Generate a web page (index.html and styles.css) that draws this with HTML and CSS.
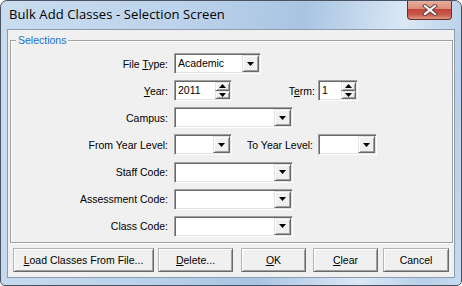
FILE: index.html
```html
<!DOCTYPE html>
<html lang="en">
<head>
  <meta charset="UTF-8">
  <title>Bulk Add Classes - Selection Screen</title>
  <link rel="stylesheet" href="styles.css">
</head>
<body>

  <!-- Dialog window -->
  <div class="window">
    <div class="titlebar">
      <span class="title">Bulk Add Classes - Selection Screen</span>
      <div class="close">
        <svg width="16" height="12" viewBox="0 0 16 12">
          <path d="M3 2 L13 10 M13 2 L3 10" stroke="#5a3b36" stroke-width="4" stroke-linecap="square"/>
          <path d="M3 2 L13 10 M13 2 L3 10" stroke="#fff" stroke-width="2.2" stroke-linecap="square"/>
        </svg>
      </div>
    </div>

    <div class="client">
      <!-- Selections group -->
      <div class="group">
        <span class="legend">Selections</span>
        <div class="rows">
          <div class="row">
            <label class="lbl">File <u>T</u>ype:</label>
            <div class="field w-type">
              <span class="val">Academic</span>
              <span class="drop"><svg width="7" height="4"><polygon points="0,0 7,0 3.5,4" fill="#000"/></svg></span>
            </div>
          </div>
          <div class="row">
            <label class="lbl"><u>Y</u>ear:</label>
            <div class="field w-year">
              <span class="val">2011</span>
              <span class="spin">
                <span class="arrow"><svg width="7" height="4"><polygon points="3.5,0 7,4 0,4" fill="#000"/></svg></span>
                <span class="arrow"><svg width="7" height="4"><polygon points="0,0 7,0 3.5,4" fill="#000"/></svg></span>
              </span>
            </div>
            <label class="lbl-term">T<u>e</u>rm:</label>
            <div class="field w-term">
              <span class="val">1</span>
              <span class="spin">
                <span class="arrow"><svg width="7" height="4"><polygon points="3.5,0 7,4 0,4" fill="#000"/></svg></span>
                <span class="arrow"><svg width="7" height="4"><polygon points="0,0 7,0 3.5,4" fill="#000"/></svg></span>
              </span>
            </div>
          </div>
          <div class="row">
            <label class="lbl">Campus:</label>
            <div class="field w-wide">
              <span class="val"></span>
              <span class="drop"><svg width="7" height="4"><polygon points="0,0 7,0 3.5,4" fill="#000"/></svg></span>
            </div>
          </div>
          <div class="row">
            <label class="lbl">From Year Level:</label>
            <div class="field w-level">
              <span class="val"></span>
              <span class="drop"><svg width="7" height="4"><polygon points="0,0 7,0 3.5,4" fill="#000"/></svg></span>
            </div>
            <label class="lbl-to">To Year Level:</label>
            <div class="field w-level2">
              <span class="val"></span>
              <span class="drop"><svg width="7" height="4"><polygon points="0,0 7,0 3.5,4" fill="#000"/></svg></span>
            </div>
          </div>
          <div class="row">
            <label class="lbl">Staff Code:</label>
            <div class="field w-wide">
              <span class="val"></span>
              <span class="drop"><svg width="7" height="4"><polygon points="0,0 7,0 3.5,4" fill="#000"/></svg></span>
            </div>
          </div>
          <div class="row">
            <label class="lbl">Assessment Code:</label>
            <div class="field w-wide">
              <span class="val"></span>
              <span class="drop"><svg width="7" height="4"><polygon points="0,0 7,0 3.5,4" fill="#000"/></svg></span>
            </div>
          </div>
          <div class="row">
            <label class="lbl">Class Code:</label>
            <div class="field w-wide">
              <span class="val"></span>
              <span class="drop"><svg width="7" height="4"><polygon points="0,0 7,0 3.5,4" fill="#000"/></svg></span>
            </div>
          </div>
        </div>
      </div>

      <!-- Dialog buttons -->
      <div class="buttons">
        <button class="btn b-load"><u>L</u>oad Classes From File...</button>
        <button class="btn b-delete"><u>D</u>elete...</button>
        <button class="btn b-ok"><u>O</u>K</button>
        <button class="btn b-clear"><u>C</u>lear</button>
        <button class="btn b-cancel">Cancel</button>
      </div>
    </div>
  </div>

</body>
</html>
```

FILE: styles.css
```css
/* Page */
body { margin: 0; background: #fff; }

/* Window frame */
.window {
  width: 462px;
  height: 286px;
  box-sizing: border-box;
  border: 1px solid #4a5361;
  border-radius: 7px 7px 5px 5px;
  background: linear-gradient(100deg, #c9dcf0 0%, #bdd3eb 35%, #a9c4e2 60%, #dbe8f5 80%, #b9d0ea 92%, #c6d9ee 100%);
  padding: 0 6px 7px;
  display: flex;
  flex-direction: column;
  overflow: hidden;
}

/* Title bar */
.titlebar {
  height: 28px;
  display: flex;
  align-items: flex-start;
}
.title {
  font-family: "Open Sans", sans-serif;
  font-size: 13px;
  letter-spacing: 0.1px;
  color: #000;
  margin: 4px 0 0 2px;
}
.close {
  margin: -1px 3px 0 auto;
  width: 45px;
  height: 20px;
  box-sizing: border-box;
  border: 1px solid #6a2f28;
  border-top: none;
  border-radius: 0 0 4px 4px;
  background: linear-gradient(#eab3a3 0%, #dc8e7a 45%, #c2473a 50%, #c75545 75%, #dd9880 100%);
  display: flex;
  align-items: center;
  justify-content: center;
}

/* Client area */
.client {
  flex: 1;
  background: #f0f0f0;
  border: 1px solid #8c9cb0;
  display: flex;
  flex-direction: column;
  font-family: "Liberation Sans", Arial, sans-serif;
  font-size: 10.5px;
  color: #000;
}

/* Group box */
.group {
  position: relative;
  margin: 10px 0 0 2px;
  width: 443px;
  height: 203px;
  box-sizing: border-box;
  border: 1px solid #a0a0a0;
  box-shadow: inset 1px 1px #fff, 1px 1px #fff;
}
.legend {
  position: absolute;
  top: -7px;
  left: 5px;
  padding: 0 2px;
  background: #f0f0f0;
  color: #1a6fd1;
  line-height: 12px;
}
.rows {
  display: flex;
  flex-direction: column;
  gap: 6.17px;
  padding-top: 12px;
}
.row {
  display: flex;
  align-items: center;
  height: 21px;
}
.lbl {
  width: 157px;
  margin-right: 6px;
  text-align: right;
}
.lbl-term { width: 83px; margin-right: 3px; text-align: right; }
.lbl-to { width: 81px; margin-right: 5px; text-align: right; }

/* Sunken fields */
.field {
  height: 21px;
  box-sizing: border-box;
  background: #fff;
  border: 1px solid;
  border-color: #a0a0a0 #fff #fff #a0a0a0;
  box-shadow: inset 1px 1px #696969, inset -1px -1px #e3e3e3;
  padding: 1px;
  display: flex;
}
.w-type { width: 87px; }
.w-year { width: 58px; }
.w-term { width: 40px; }
.w-wide { width: 119px; }
.w-level { width: 58px; }
.w-level2 { width: 59px; }
.val {
  flex: 1;
  padding-left: 2px;
  line-height: 17px;
}

/* Raised parts */
.drop, .arrow {
  box-sizing: border-box;
  background: #f0f0f0;
  border: 1px solid;
  border-color: #e3e3e3 #696969 #696969 #e3e3e3;
  box-shadow: inset 1px 1px #fff, inset -1px -1px #a0a0a0;
  display: flex;
  align-items: center;
  justify-content: center;
}
.drop { width: 17px; height: 17px; }
.drop svg, .arrow svg { display: block; }
.spin {
  width: 15px;
  display: flex;
  flex-direction: column;
}
.arrow { flex: 1; }

/* Buttons */
.buttons {
  display: flex;
  margin-top: 5px;
}
.btn {
  height: 24px;
  box-sizing: border-box;
  padding: 0;
  background: #f0f0f0;
  border: 1px solid;
  border-color: #b4b4b4 #696969 #696969 #b4b4b4;
  box-shadow: inset 1px 1px #fff, inset -1px -1px #a0a0a0;
  font-family: "Liberation Sans", Arial, sans-serif;
  font-size: 10.5px;
  color: #000;
}
.b-load { width: 141px; margin-left: 5px; }
.b-delete { width: 75px; margin-left: 4px; }
.b-ok { width: 65px; margin-left: 8px; }
.b-clear { width: 65px; margin-left: 7px; }
.b-cancel { width: 66px; margin-left: 5px; }
```
